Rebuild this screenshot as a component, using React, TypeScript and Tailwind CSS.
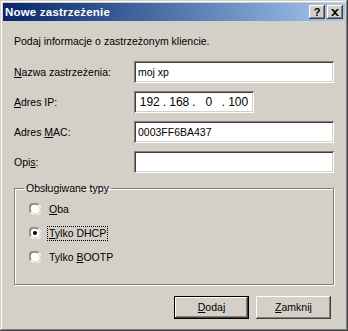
import type { ReactNode } from "react";

const sunken =
  "bg-white shadow-[inset_1px_1px_#808080,inset_-1px_-1px_#ffffff,inset_2px_2px_#404040,inset_-2px_-2px_#d4d0c8]";
const raised =
  "bg-[#d4d0c8] shadow-[inset_-1px_-1px_#404040,inset_1px_1px_#ffffff,inset_-2px_-2px_#808080,inset_2px_2px_#d4d0c8]";

function Key({ children }: { children: ReactNode }) {
  return <span className="underline underline-offset-[1px]">{children}</span>;
}

function Field({
  label,
  width = "w-[200px]",
  children,
}: {
  label: ReactNode;
  width?: string;
  children?: ReactNode;
}) {
  return (
    <div className="flex h-[22px] items-center">
      <div className="w-[120px] shrink-0">{label}</div>
      <div className={`flex h-[22px] items-center px-[4px] ${sunken} ${width}`}>
        {children}
      </div>
    </div>
  );
}

function Radio({ checked }: { checked?: boolean }) {
  return (
    <svg width="12" height="12" viewBox="0 0 12 12" className="shrink-0">
      <circle cx="6" cy="6" r="5.5" fill="#ffffff" />
      <path d="M1.2 9.4 A5.5 5.5 0 0 1 9.4 1.2" stroke="#808080" strokeWidth="1" fill="none" />
      <path d="M2.2 8.6 A4.5 4.5 0 0 1 8.6 2.2" stroke="#404040" strokeWidth="1" fill="none" />
      <path d="M10.8 2.6 A5.5 5.5 0 0 1 2.6 10.8" stroke="#ffffff" strokeWidth="1" fill="none" />
      <path d="M9.8 3.4 A4.5 4.5 0 0 1 3.4 9.8" stroke="#d4d0c8" strokeWidth="1" fill="none" />
      {checked && <circle cx="6" cy="6" r="2" fill="#000000" />}
    </svg>
  );
}

function Option({
  checked,
  focused,
  children,
}: {
  checked?: boolean;
  focused?: boolean;
  children: ReactNode;
}) {
  return (
    <div className="flex h-[16px] items-center gap-[6px]">
      <Radio checked={checked} />
      <span
        className={
          focused
            ? "border border-dotted border-black px-[1px] leading-[13px]"
            : "border border-transparent px-[1px] leading-[13px]"
        }
      >
        {children}
      </span>
    </div>
  );
}

export default function App() {
  return (
    <div
      className="flex h-[331px] w-[348px] flex-col bg-[#d4d0c8] p-[3px] text-[10.5px] leading-[13px] text-black shadow-[inset_-1px_-1px_#404040,inset_1px_1px_#d4d0c8,inset_-2px_-2px_#808080,inset_2px_2px_#ffffff]"
      style={{ fontFamily: '"Liberation Sans", Arial, sans-serif' }}
    >
      <div className="flex h-[18px] shrink-0 items-center justify-between bg-gradient-to-r from-[#0a246a] to-[#a6caf0] pl-[2px] pr-[2px]">
        <span className="text-[11.5px] font-bold tracking-[0.2px] text-white">
          Nowe zastrzeżenie
        </span>
        <div className="flex gap-[2px]">
          <div
            className={`flex h-[14px] w-[16px] items-center justify-center text-[11px] font-bold ${raised}`}
          >
            ?
          </div>
          <div className={`flex h-[14px] w-[16px] items-center justify-center ${raised}`}>
            <svg width="8" height="7" viewBox="0 0 8 7">
              <path d="M0 0h2l2 2 2-2h2L5 3.5 8 7H6L4 5 2 7H0l3-3.5z" fill="#000" />
            </svg>
          </div>
        </div>
      </div>

      <div className="flex flex-1 flex-col px-[11px]">
        <p className="mt-[14px]">Podaj informacje o zastrzeżonym kliencie.</p>

        <div className="mt-[13px] flex flex-col gap-[8px]">
          <Field
            label={
              <>
                <Key>N</Key>azwa zastrzeżenia:
              </>
            }
          >
            moj xp
          </Field>
          <Field
            width="w-[120px]"
            label={
              <>
                <Key>A</Key>dres IP:
              </>
            }
          >
            <div className="flex w-full items-center text-[12px]">
              <span className="w-[24px] text-center">192</span>
              <span className="w-[6px] text-center">.</span>
              <span className="w-[24px] text-center">168</span>
              <span className="w-[6px] text-center">.</span>
              <span className="w-[24px] text-center">0</span>
              <span className="w-[6px] text-center">.</span>
              <span className="w-[24px] text-center">100</span>
            </div>
          </Field>
          <Field
            label={
              <>
                Adres <Key>M</Key>AC:
              </>
            }
          >
            0003FF6BA437
          </Field>
          <Field
            label={
              <>
                Opi<Key>s</Key>:
              </>
            }
          />
        </div>

        <fieldset className="mt-[9px] h-[103px] w-[320px] border border-[#808080] pl-[14px] pt-[6px] shadow-[1px_1px_#ffffff,inset_1px_1px_#ffffff]">
          <legend className="ml-[-5px] px-[2px]">Obsługiwane typy</legend>
          <div className="flex flex-col gap-[8px]">
            <Option>
              <Key>O</Key>ba
            </Option>
            <Option checked focused>
              <Key>T</Key>ylko DHCP
            </Option>
            <Option>
              Tylko <Key>B</Key>OOTP
            </Option>
          </div>
        </fieldset>

        <div className="mt-[11px] flex justify-end gap-[7px] pr-[3px]">
          <div className="flex h-[23px] w-[75px] items-center justify-center border border-black bg-[#d4d0c8] shadow-[inset_-1px_-1px_#404040,inset_1px_1px_#ffffff,inset_-2px_-2px_#808080]">
            <Key>D</Key>odaj
          </div>
          <div className={`flex h-[23px] w-[75px] items-center justify-center ${raised}`}>
            <Key>Z</Key>amknij
          </div>
        </div>
      </div>
    </div>
  );
}
